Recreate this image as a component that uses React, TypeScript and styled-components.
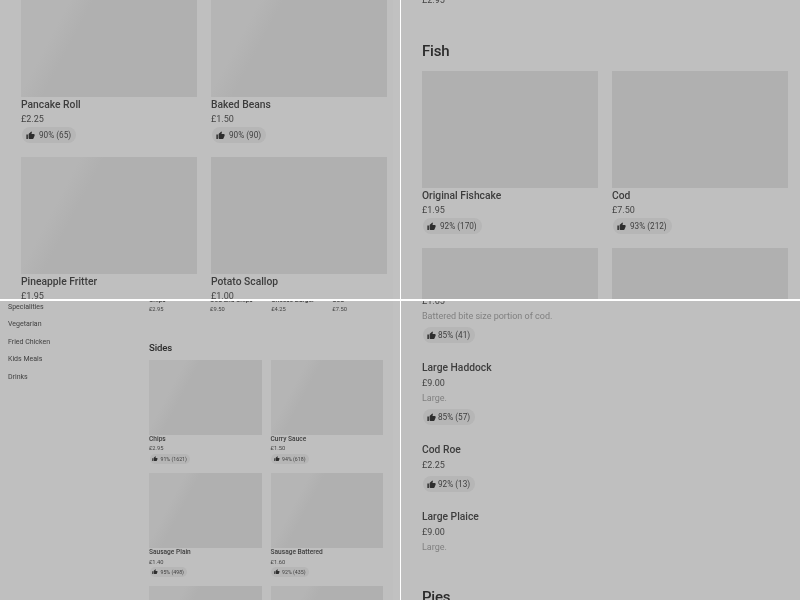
import styled, { createGlobalStyle } from "styled-components";
import { MdThumbUp } from "react-icons/md";

const GlobalStyle = createGlobalStyle`
  html, body {
    margin: 0;
    padding: 0;
    background: #fff;
  }
  * {
    box-sizing: border-box;
  }
`;

const Screen = styled.div`
  display: grid;
  grid-template-columns: 400px 399px;
  grid-template-rows: 299px 299px;
  column-gap: 1px;
  row-gap: 2px;
  width: 800px;
  height: 600px;
  background: #fff;
  font-family: Roboto, "Liberation Sans", sans-serif;
`;

const Pane = styled.section<{ $left?: boolean }>`
  overflow: hidden;
  background: #bfbfbf;
  color: #333;
  border-right: ${(props) => (props.$left ? "7px solid #c1c1c1" : "0")};
`;

const Scrolled = styled.div<{ $top: number; $left: number }>`
  margin-top: ${(props) => props.$top}px;
  padding-left: ${(props) => props.$left}px;
  will-change: transform;
`;

const Grid = styled.div`
  display: grid;
  grid-template-columns: 176px 176px;
  gap: 14px;
`;

const Strip = styled.div`
  display: grid;
  grid-template-columns: repeat(4, 81.5px);
  column-gap: 14px;
`;

const Card = styled.div`
  min-width: 0;
`;

const Photo = styled.div<{ $height?: number; $sheen?: number }>`
  height: ${(props) => props.$height ?? 117}px;
  background: ${(props) =>
    props.$sheen
      ? `linear-gradient(118deg, #b5b5b5 ${props.$sheen}%, #b0b0b0 ${props.$sheen + 10}%)`
      : "#b0b0b0"};
`;

const Name = styled.div`
  height: 15px;
  font-size: 10.3px;
  line-height: 15px;
  font-weight: 500;
  white-space: nowrap;
  color: #3d3d3d;
`;

const Price = styled.div`
  height: 15px;
  font-size: 9px;
  line-height: 15px;
  color: #444;
  white-space: nowrap;
`;

const Description = styled.div`
  height: 15px;
  font-size: 9px;
  line-height: 15px;
  color: #808080;
  white-space: nowrap;
`;

const Pill = styled.div<{ $tight?: boolean }>`
  display: flex;
  align-items: center;
  gap: ${(props) => (props.$tight ? "2px" : "4px")};
  width: fit-content;
  height: 16px;
  margin-left: 1px;
  padding: 0 5px 0 4px;
  border-radius: 8px;
  background: #b6b6b6;
  font-size: 8.2px;
  color: #3f3f3f;
  white-space: nowrap;
  svg {
    width: 9px;
    height: 9px;
    color: #2e2e2e;
  }
`;

const Heading = styled.h2<{ $top?: number }>`
  margin: ${(props) => props.$top ?? 0}px 0 10px;
  height: 20px;
  font-size: 15px;
  line-height: 20px;
  font-weight: 500;
  letter-spacing: -0.2px;
  color: #2b2b2b;
`;

const ListItem = styled.div`
  padding-bottom: 17px;
`;

const ListName = styled(Name)`
  height: 16px;
  line-height: 16px;
`;

const ListPill = styled(Pill)`
  margin-top: 3px;
`;

const Split = styled.div`
  display: flex;
  will-change: transform;
`;

const Sidebar = styled.nav`
  flex: none;
  width: 149px;
  padding: 0 0 0 8px;
  margin-top: 1px;
  display: flex;
  flex-direction: column;
  gap: 7.4px;
`;

const SideLink = styled.a`
  height: 10px;
  font-size: 7px;
  line-height: 10px;
  color: #3f3f3f;
`;

const Scaled = styled.div`
  zoom: 0.64;
  margin-top: -8px;
`;

const SmallHeading = styled(Heading)`
  margin: 42px 0 8px;
`;

type Dish = { name: string; price: string; rating?: string; sheen?: number };

const DishCard = ({ name, price, rating, sheen }: Dish) => (
  <Card>
    <Photo $sheen={sheen} />
    <Name>{name}</Name>
    <Price>{price}</Price>
    {rating && (
      <Pill>
        <MdThumbUp />
        {rating}
      </Pill>
    )}
  </Card>
);

const sides: Dish[] = [
  { name: "Chips", price: "£2.95", rating: "91% (1621)", sheen: 24 },
  { name: "Curry Sauce", price: "£1.50", rating: "94% (618)", sheen: 24 },
  { name: "Sausage Plain", price: "£1.40", rating: "95% (498)", sheen: 24 },
  { name: "Sausage Battered", price: "£1.60", rating: "92% (435)", sheen: 26 },
  { name: "", price: "", sheen: 24 },
  { name: "", price: "", sheen: 24 },
];

const popular = [
  { name: "Chips", price: "£2.95" },
  { name: "Cod and Chips", price: "£9.50" },
  { name: "Cheese Burger", price: "£4.25" },
  { name: "Cod", price: "£7.50" },
];

const sideLinks = ["Specialities", "Vegetarian", "Fried Chicken", "Kids Meals", "Drinks"];

const App = () => (
  <>
    <GlobalStyle />
    <Screen>
      <Pane $left>
        <Scrolled $top={-20} $left={21}>
          <Grid>
            <DishCard name="Pancake Roll" price="£2.25" rating="90% (65)" sheen={25} />
            <DishCard name="Baked Beans" price="£1.50" rating="90% (90)" sheen={25} />
            <DishCard name="Pineapple Fritter" price="£1.95" sheen={25} />
            <DishCard name="Potato Scallop" price="£1.00" />
          </Grid>
        </Scrolled>
      </Pane>

      <Pane>
        <Scrolled $top={-7} $left={21}>
          <Price>£2.95</Price>
          <Heading $top={33}>Fish</Heading>
          <Grid>
            <DishCard name="Original Fishcake" price="£1.95" rating="92% (170)" />
            <DishCard name="Cod" price="£7.50" rating="93% (212)" />
            <DishCard name="Small Cod" price="£1.65" />
            <DishCard name="Haddock" price="£7.50" />
          </Grid>
        </Scrolled>
      </Pane>

      <Pane $left>
        <Split>
          <Sidebar>
            {sideLinks.map((label) => (
              <SideLink key={label}>{label}</SideLink>
            ))}
          </Sidebar>
          <Scaled>
            <Strip>
              {popular.map(({ name, price }) => (
                <Card key={name}>
                  <Name>{name}</Name>
                  <Price>{price}</Price>
                </Card>
              ))}
            </Strip>
            <SmallHeading>Sides</SmallHeading>
            <Grid>
              {sides.map((dish, i) => (
                <DishCard key={i} {...dish} />
              ))}
            </Grid>
          </Scaled>
        </Split>
      </Pane>

      <Pane>
        <Scrolled $top={-7.5} $left={21}>
          <ListItem>
            <Price>£1.65</Price>
            <Description>Battered bite size portion of cod.</Description>
            <ListPill $tight>
              <MdThumbUp />
              85% (41)
            </ListPill>
          </ListItem>
          <ListItem>
            <ListName>Large Haddock</ListName>
            <Price>£9.00</Price>
            <Description>Large.</Description>
            <ListPill $tight>
              <MdThumbUp />
              85% (57)
            </ListPill>
          </ListItem>
          <ListItem>
            <ListName>Cod Roe</ListName>
            <Price>£2.25</Price>
            <ListPill $tight>
              <MdThumbUp />
              92% (13)
            </ListPill>
          </ListItem>
          <ListItem>
            <ListName>Large Plaice</ListName>
            <Price>£9.00</Price>
            <Description>Large.</Description>
          </ListItem>
          <Heading $top={15}>Pies</Heading>
        </Scrolled>
      </Pane>
    </Screen>
  </>
);

export default App;
